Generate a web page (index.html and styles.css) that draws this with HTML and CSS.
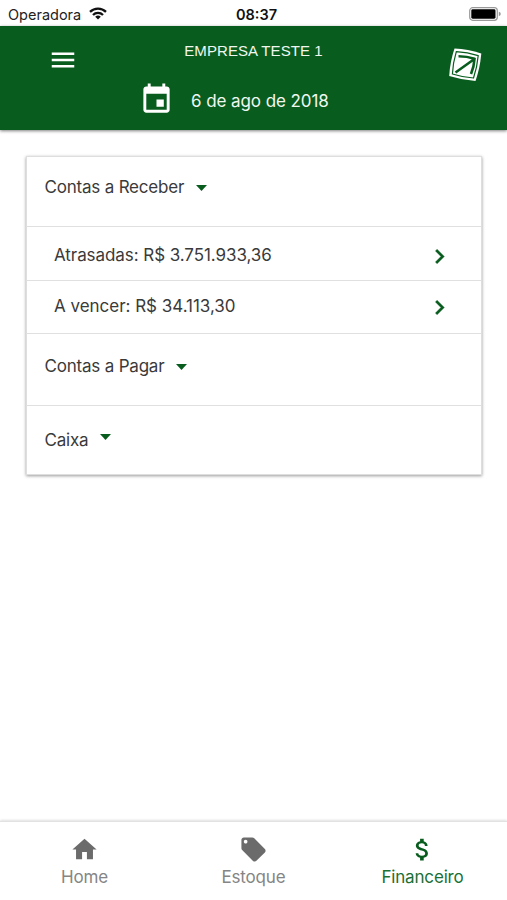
FILE: index.html
```html
<!DOCTYPE html>
<html lang="pt-BR">
<head>
<meta charset="utf-8">
<title>Financeiro</title>
<link rel="stylesheet" href="styles.css">
</head>
<body>
<div class="status">
  <div class="carrier"><span>Operadora</span>
    <svg class="wifi" viewBox="0 0 18 13"><g fill="none" stroke="#111" stroke-width="2.3"><path d="M1 4.8a11.5 11.5 0 0 1 16 0"/><path d="M4 8a7 7 0 0 1 10 0"/></g><path d="M9 12.6 6.2 9.8a4 4 0 0 1 5.6 0z" fill="#111"/></svg>
  </div>
  <div class="clock">08:37</div>
  <svg class="battery" viewBox="0 0 32 14"><rect x=".7" y=".7" width="27.6" height="12.6" rx="3" fill="#fff" stroke="#999" stroke-width="1.2"/><rect x="2.3" y="2.3" width="24.2" height="9.4" rx="1.4" fill="#000"/><path d="M29.8 4.8q2 .6 2 2.2t-2 2.2z" fill="#999"/></svg>
</div>
<header class="header">
  <svg class="menu" viewBox="0 0 24 24"><path d="M3 18h18v-2H3v2zm0-5h18v-2H3v2zm0-7v2h18V6H3z"/></svg>
  <div class="heading">
    <h1 class="company">EMPRESA TESTE 1</h1>
    <div class="date">
      <svg class="calendar" viewBox="0 0 24 24"><path d="M17 12h-5v5h5v-5zM16 1v2H8V1H6v2H5c-1.11 0-1.99.9-1.99 2L3 19c0 1.100.89 2 2 2h14c1.100 0 2-.9 2-2V5c0-1.100-.9-2-2-2h-1V1h-2zm3 18H5V8h14v11z"/></svg>
      <span class="date-text">6 de ago de 2018</span>
    </div>
  </div>
  <svg class="logo" viewBox="0 0 34 34"><path d="M6.500 .5Q20 1 33.300 5.500 32 20 27.500 33 14 32 1.200 28 2 14 6.500 .5z"/><path class="logo-line" d="M8.300 3.600Q19.500 4 30.200 7.600 29.200 19 25.500 30 15 29.400 4.400 26 5 14.500 8.300 3.600z"/><path class="logo-arrow" d="M7.500 24.500 25 12M10.500 8.300Q19 8.300 26.500 10.800 26 19 23 26"/></svg>
</header>
<main class="content">
  <section class="card">
    <div class="group receber"><span class="label">Contas a Receber</span><svg class="caret" viewBox="0 0 11 6"><path d="M0 0h11L5.500 6z"/></svg></div>
    <div class="row overdue"><span class="overdue-text">Atrasadas: R$ 3.751.933,36</span><svg class="chevron" viewBox="0 0 24 24"><path d="M10 6 8.590 7.410 13.170 12l-4.580 4.590L10 18l6-6z"/></svg></div>
    <div class="row due"><span class="due-text">A vencer: R$ 34.113,30</span><svg class="chevron" viewBox="0 0 24 24"><path d="M10 6 8.590 7.410 13.170 12l-4.580 4.590L10 18l6-6z"/></svg></div>
    <div class="group pagar"><span class="label">Contas a Pagar</span><svg class="caret" viewBox="0 0 11 6"><path d="M0 0h11L5.500 6z"/></svg></div>
    <div class="group caixa"><span class="label">Caixa</span><svg class="caret" viewBox="0 0 11 6"><path d="M0 0h11L5.500 6z"/></svg></div>
  </section>
</main>
<nav class="tabs">
  <div class="tab"><svg class="tab-icon" viewBox="0 0 24 24"><path d="M10 20v-6h4v6h5v-8h3L12 3 2 12h3v8z"/></svg><span>Home</span></div>
  <div class="tab"><svg class="tab-icon" viewBox="0 0 24 24"><path d="M21.410 11.580l-9-9C12.050 2.220 11.550 2 11 2H4c-1.100 0-2 .9-2 2v7c0 .55.220 1.050.590 1.420l9 9c.36.36.86.58 1.410.58s1.050-.22 1.410-.59l7-7c.37-.36.590-.86.590-1.410s-.23-1.060-.59-1.420zM5.500 7C4.670 7 4 6.330 4 5.500S4.670 4 5.500 4 7 4.670 7 5.500 6.330 7 5.500 7z"/></svg><span>Estoque</span></div>
  <div class="tab active"><svg class="tab-icon" viewBox="0 0 24 24"><path d="M11.800 10.900c-2.270-.59-3-1.200-3-2.150 0-1.090 1.010-1.850 2.700-1.850 1.780 0 2.440.85 2.500 2.100h2.210c-.07-1.720-1.120-3.300-3.210-3.810V3h-3v2.160c-1.940.42-3.500 1.680-3.500 3.610 0 2.310 1.910 3.460 4.700 4.130 2.500.6 3 1.480 3 2.410 0 .69-.49 1.790-2.700 1.790-2.060 0-2.870-.92-2.980-2.100h-2.200c.12 2.190 1.760 3.420 3.680 3.830V21h3v-2.150c1.950-.37 3.500-1.500 3.500-3.550 0-2.840-2.430-3.810-4.700-4.400z"/></svg><span>Financeiro</span></div>
</nav>
</body>
</html>
```
FILE: styles.css
```css
* { box-sizing: border-box; }
body {
  margin: 0;
  height: 900px;
  display: flex;
  flex-direction: column;
  background: #fff;
  color: #3a3a3a;
  font-family: Inter, Roboto, sans-serif;
  font-size: 17px;
  overflow: hidden;
}
svg { display: block; flex: none; }

.status {
  height: 26px;
  display: grid;
  grid-template-columns: 1fr auto 1fr;
  align-items: center;
  padding: 3px 6px 0 8px;
  color: #222;
  font-size: 14.5px;
  line-height: 20px;
}
.carrier { display: flex; align-items: center; gap: 8px; }
.wifi { width: 18px; height: 13px; margin-top: -2px; }
.clock { font-weight: 600; color: #111; padding-left: 4px; }
.battery { width: 32px; height: 14px; margin-top: -2px; justify-self: end; }

.header {
  height: 104px;
  flex: none;
  display: grid;
  grid-template-columns: 92px 1fr 92px;
  background: #085d1e;
  color: #f0f7f1;
  fill: #fff;
  box-shadow: 0 1px 3px rgba(0, 0, 0, .5);
}
.menu { width: 30px; height: 30px; margin: 19px 0 0 48px; }
.company {
  margin: 15px 0 0;
  text-align: center;
  font: 400 15px/20px "Liberation Sans", sans-serif;
  letter-spacing: .08px;
}
.date { display: flex; align-items: center; margin: 21px 0 0 47px; gap: 17px; }
.date-text { letter-spacing: -.08px; padding-top: 2px; }
.calendar { width: 35px; height: 35px; }
.logo { width: 34px; height: 34px; margin: 22px 0 0 33px; }
.logo-line { fill: none; stroke: #085d1e; stroke-width: 1.2; }
.logo-arrow { fill: none; stroke: #085d1e; stroke-width: 2.6; }

.content { flex: 1; padding: 26px 25px 0 26px; }
.card {
  border: 1px solid #dedede;
  box-shadow: 0 1px 3px rgba(0, 0, 0, .4);
  height: 319px;
}
.group, .row { display: flex; border-bottom: 1px solid #e0e0e0; }
.group { padding-left: 17.5px; line-height: 24px; gap: 12px; }
.label { letter-spacing: -.2px; }
.caret { width: 11px; height: 6px; fill: #085d1e; }
.receber { height: 70px; padding-top: 18px; }
.receber .caret, .pagar .caret { margin-top: 10px; }
.row {
  align-items: center;
  justify-content: space-between;
  padding: 0 27px;
}
.overdue { height: 54px; padding-top: 3px; }
.overdue-text { letter-spacing: -.07px; }
.due { height: 53px; padding-bottom: 2px; }
.due-text { letter-spacing: -.02px; }
.chevron { width: 29px; height: 29px; fill: #085d1e; stroke: #085d1e; stroke-width: .3; margin-top: 3px; }
.pagar { height: 72px; padding-top: 20px; }
.caixa { height: 68px; padding-top: 22px; border: 0; }
.caixa .caret { margin-top: 6px; }

.tabs {
  height: 79px;
  flex: none;
  display: grid;
  grid-template-columns: repeat(3, 1fr);
  padding-top: 13px;
  border-top: 1px solid #e2e2e2;
  box-shadow: 0 -1px 2px rgba(0, 0, 0, .12);
}
.tab {
  display: flex;
  flex-direction: column;
  align-items: center;
  color: #858585;
  fill: #6b6b6b;
  line-height: 26px;
  letter-spacing: -.16px;
}
.tab-icon { width: 29px; height: 29px; }
.active { color: #1b7034; fill: #085d1e; }
```
